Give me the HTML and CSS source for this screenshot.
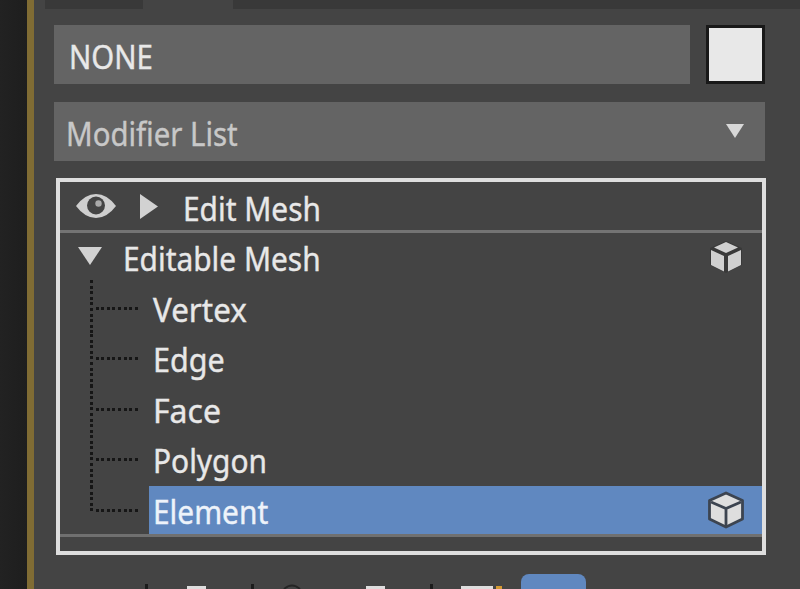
FILE: index.html
```
<!DOCTYPE html>
<html lang="en">
<head>
    <meta charset="UTF-8">
    <meta name="viewport" content="width=device-width, initial-scale=1.0">
    <title>Modifier Stack</title>
    <link rel="stylesheet" href="styles.css">
</head>
<body>

<div class="viewport-edge"></div>

<div class="panel">
    <div class="tabs">
        <div class="tab"></div>
        <div class="tab active"></div>
        <div class="tab rest"></div>
    </div>

    <div class="name-row">
        <div class="field name-field"><span class="text name-text">NONE</span></div>
        <div class="swatch"></div>
    </div>

    <div class="field modifier-list">
        <span class="text list-text">Modifier List</span>
        <svg class="list-arrow" width="18" height="14" viewBox="0 0 18 14"><path d="M0 0H18L9 14Z" fill="#d8d8d8"/></svg>
    </div>

    <div class="stack">
        <div class="row modifier">
            <svg class="eye" width="42" height="28" viewBox="0 0 42 28">
                <path d="M1 14Q10 2 21 2T41 14Q32 26 21 26T1 14Z" fill="#cfcfcf"/>
                <circle cx="21" cy="13.5" r="9" fill="#444"/>
                <circle cx="23.5" cy="11.5" r="3.2" fill="#aaa"/>
            </svg>
            <svg class="collapsed" width="18" height="25" viewBox="0 0 18 25"><path d="M0 0L18 12.500L0 25Z" fill="#d2d2d2"/></svg>
            <span class="text edit-text">Edit Mesh</span>
        </div>
        <div class="row base">
            <svg class="expanded" width="24" height="18" viewBox="0 0 24 18"><path d="M0 0H24L12 18Z" fill="#d2d2d2"/></svg>
            <span class="text editable-text">Editable Mesh</span>
            <svg class="cube" width="38" height="38" viewBox="0 0 38 38">
                <path d="M19 3L35 10V27L19 35L3 27V10Z" fill="#393939"/>
                <path d="M19 4L31 9.500L19 15L7 9.500Z" fill="#d0d0d0"/>
                <path d="M4 12L17 18V33.500L4 27Z" fill="#d0d0d0"/>
                <path d="M34 12L21 18V33.500L34 27Z" fill="#d0d0d0"/>
            </svg>
        </div>
        <div class="row sub first"><i class="branch"></i><span class="label"><span class="text vertex-text">Vertex</span></span></div>
        <div class="row sub"><i class="branch"></i><span class="label"><span class="text edge-text">Edge</span></span></div>
        <div class="row sub"><i class="branch"></i><span class="label"><span class="text face-text">Face</span></span></div>
        <div class="row sub"><i class="branch"></i><span class="label"><span class="text polygon-text">Polygon</span></span></div>
        <div class="row sub last">
            <i class="branch"></i>
            <span class="label selected">
                <span class="text element-text">Element</span>
                <svg class="cube" width="38" height="38" viewBox="0 0 38 38">
                    <path d="M19 2L35.500 9.500V28L19 36L2.500 28V9.500Z" fill="#dedede" stroke="#3c4450" stroke-width="2.800" stroke-linejoin="round"/>
                    <path d="M4 11L19 17.500L34 11M19 17.500V35" fill="none" stroke="#3c4450" stroke-width="2.800"/>
                </svg>
            </span>
        </div>
    </div>

    <div class="toolbar">
        <svg class="tools" width="460" height="15" viewBox="0 0 460 15">
            <path d="M100 10h3v5h-3zM206 10h3v5h-3zM385 10h3v5h-3z" fill="#1c1c1c"/>
            <path d="M239 15Q247 8 255 15" fill="none" stroke="#252525" stroke-width="2"/>
            <path d="M142 12h19v3h-19zM321 12h19v3h-19zM416 12h32v3h-32z" fill="#dedede"/>
            <path d="M451 12h6v3h-6z" fill="#d59a32"/>
        </svg>
        <div class="tool-button"></div>
    </div>
</div>

</body>
</html>
```

FILE: styles.css
```
body {
    margin: 0;
    height: 589px;
    display: flex;
    overflow: hidden;
    background-color: #444;
    font-family: "Noto Sans", sans-serif;
    font-size: 33px;
    color: #e8e8e8;
}

.viewport-edge {
    width: 27px;
    background: linear-gradient(to right, #222, #1e1e1e);
    border-right: 7px solid #806c34;
}

.panel {
    width: 766px;
    height: 589px;
    display: flex;
    flex-direction: column;
}

.tabs {
    display: flex;
    height: 9px;
    padding-left: 11px;
}

.tab {
    width: 98px;
    background-color: #393939;
}

.tab.active {
    width: 90px;
    background-color: #444;
}

.tab.rest {
    flex: 1;
}

.text {
    display: block;
    line-height: 46px;
    white-space: nowrap;
    -webkit-text-stroke: 0.4px currentColor;
    transform-origin: left center;
    transform: scaleX(0.905);
}

.name-row {
    display: flex;
    gap: 16px;
    margin: 16px 0 0 20px;
}

.field {
    height: 59px;
    background-color: #646464;
    display: flex;
    box-sizing: border-box;
}

.name-field {
    width: 636px;
    padding: 9px 0 0 15px;
}

.name-text {
    transform: scaleX(0.89);
}

.swatch {
    width: 59px;
    height: 59px;
    box-sizing: border-box;
    border: 3px solid #191919;
    background-color: #e8e8e8;
}

.modifier-list {
    width: 711px;
    margin: 18px 0 0 20px;
    padding: 9px 21px 0 12px;
    justify-content: space-between;
    color: #c8c8c8;
}

.list-text {
    transform: scaleX(0.89);
}

.list-arrow {
    margin-top: 13px;
}

.stack {
    width: 710px;
    height: 377px;
    box-sizing: border-box;
    margin: 17px 0 0 22px;
    border: 4px solid #dedede;
}

.row {
    display: flex;
    height: 50.6px;
}

.modifier {
    height: 48px;
    border-bottom: 3px solid #747474;
}

.eye {
    margin: 10px 0 0 15px;
}

.collapsed {
    margin: 12px 0 0 23px;
}

.edit-text {
    margin: 4px 0 0 25px;
}

.expanded {
    margin: 14px 0 0 18px;
}

.editable-text {
    margin: 3px 0 0 21px;
}

.cube {
    margin: 5px 17px 0 auto;
}

.sub {
    padding-left: 30px;
    background: repeating-linear-gradient(to bottom, #161616 0 3px, transparent 3px 5.6px) 30px 0 / 3px 100% no-repeat;
}

.first {
    margin-top: -4px;
    padding-top: 4px;
}

.branch {
    width: 47px;
    height: 3px;
    margin: 23px 9px 0 3px;
    background: repeating-linear-gradient(to right, transparent 0 2.6px, #161616 2.6px 5.6px);
}

.label {
    flex: 1;
    display: flex;
    padding: 3px 0 0 4px;
}

.vertex-text {
    transform: scaleX(0.95);
}

.edge-text {
    transform: scaleX(0.925);
}

.face-text {
    transform: scaleX(0.97);
}

.last {
    height: 48px;
    border-bottom: 3px solid #707070;
    background-size: 3px 26px;
}

.selected {
    background-color: #6088c0;
    color: #eef3fa;
}

.selected .cube {
    margin-top: 2px;
}

.toolbar {
    display: flex;
    margin-top: 19px;
    padding-left: 11px;
    height: 15px;
}

.tools {
    width: 460px;
}

.tool-button {
    width: 65px;
    height: 30px;
    margin-left: 16px;
    border-radius: 8px;
    background-color: #6088c0;
}
```
